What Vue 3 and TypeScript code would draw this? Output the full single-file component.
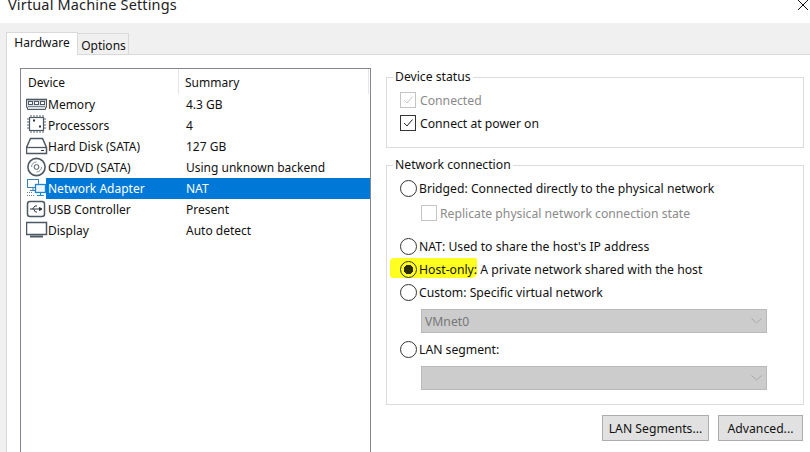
<script setup lang="ts">
const devices = [
  { id: 'mem', name: 'Memory', summary: '4.3 GB' },
  { id: 'cpu', name: 'Processors', summary: '4' },
  { id: 'hdd', name: 'Hard Disk (SATA)', summary: '127 GB' },
  { id: 'cd', name: 'CD/DVD (SATA)', summary: 'Using unknown backend' },
  { id: 'net', name: 'Network Adapter', summary: 'NAT' },
  { id: 'usb', name: 'USB Controller', summary: 'Present' },
  { id: 'disp', name: 'Display', summary: 'Auto detect' },
]
</script>

<template>
  <div class="win">
    <div class="title">
      <span class="title-text">Virtual Machine Settings</span>
      <svg class="close" width="12" height="11" viewBox="0 0 12 11"><path d="M1 0L11 10M11 0L1 10" stroke="#111" fill="none" /></svg>
    </div>
    <div class="body">
      <div class="tabs">
        <div class="tab active">Hardware</div>
        <div class="tab">Options</div>
      </div>
      <div class="panel">
        <div class="list">
          <div class="head">
            <div class="c1">Device</div>
            <div class="c2">Summary</div>
          </div>
          <div v-for="d in devices" :key="d.id" class="row" :class="{ sel: d.id === 'net' }">
            <svg class="ico" width="22" height="21" viewBox="0 0 22 21">
              <g v-if="d.id === 'mem'" fill="none" stroke="#4d5962">
                <path d="M0.5 5.5H20.5V13.5H19.5V15.5H1.5V13.5H0.5Z" fill="#dde1e4" />
                <path d="M0 5.5H21" stroke-width="1.6" />
                <rect x="2.5" y="7.5" width="4" height="3" fill="#fff" />
                <rect x="8.5" y="7.5" width="4" height="3" fill="#fff" />
                <rect x="14.5" y="7.5" width="4" height="3" fill="#fff" />
                <path d="M2 12.5H19" stroke="#7a858d" />
              </g>
              <g v-else-if="d.id === 'cpu'" fill="none" stroke="#4d5962">
                <rect x="3.5" y="2.5" width="14" height="13" fill="#fff" stroke-width="1.2" />
                <path d="M5 0V2M8 0V2M11 0V2M14 0V2M17 0V2M5 16V18M8 16V18M11 16V18M14 16V18M17 16V18M1 4H3M1 7H3M1 10H3M1 13H3M18 4H20M18 7H20M18 10H20M18 13H20" stroke="#5b6770" />
                <path d="M7 5.5h2M13 11.5h2" stroke="#2c353c" stroke-width="2" />
              </g>
              <g v-else-if="d.id === 'hdd'" fill="none" stroke="#4d5962">
                <path d="M4.5 2.5H16.5L20.5 11.5V17.5H0.5V11.5Z" fill="#fff" stroke-width="1.5" />
                <path d="M1 11.5H20" stroke-width="1.3" />
                <path d="M15 14.5H18" stroke="#2c353c" />
              </g>
              <g v-else-if="d.id === 'cd'" fill="none" stroke="#4d5962">
                <circle cx="10.5" cy="10" r="8.6" stroke-width="1.6" fill="#fff" />
                <circle cx="10.5" cy="10" r="2.4" />
                <path d="M5.5 10a5 5 0 0 1 5-5M15.5 10a5 5 0 0 1-5 5" stroke="#8b959c" />
              </g>
              <g v-else-if="d.id === 'net'" fill="none">
                <rect x="1.5" y="1.5" width="11" height="8" fill="#fff" stroke="#3d7fb8" />
                <path d="M7 10V12M4 12.5H9" stroke="#3d7fb8" />
                <rect x="9.5" y="6.5" width="10" height="8" fill="#eef6fd" stroke="#1c86d6" stroke-width="1.3" />
                <path d="M14.5 15V17.5M11 17.5H18" stroke="#1c86d6" />
                <path d="M1 14.5H7M1 17.5H9" stroke="#6c7780" stroke-dasharray="1 1" />
              </g>
              <g v-else-if="d.id === 'usb'" fill="none" stroke="#4d5962">
                <rect x="1.5" y="2.5" width="17" height="15" rx="2.5" fill="#fff" stroke-width="1.5" />
                <path d="M4 10H14" stroke="#2c353c" />
                <path d="M13.5 8.5L16 10L13.5 11.5Z" fill="#2c353c" stroke="#2c353c" />
                <path d="M6.5 10L9 7H11M7.5 10L9.5 13H11" stroke="#2c353c" />
              </g>
              <g v-else fill="none" stroke="#4d5962">
                <rect x="0.5" y="2.5" width="20" height="12" fill="#fff" stroke-width="1.5" />
                <path d="M4 16.5H17" stroke-width="2" />
              </g>
            </svg>
            <div class="name">{{ d.name }}</div>
            <div class="sum">{{ d.summary }}</div>
          </div>
        </div>
        <div class="right">
          <fieldset class="group status">
            <legend>Device status</legend>
            <div class="inner">
              <label class="opt dis">
                <span class="cb dim"><svg width="12" height="12" viewBox="0 0 12 12"><path d="M2 6L5 9L10.5 2.5" stroke="#c8c8c8" fill="none" /></svg></span>Connected
              </label>
              <label class="opt second">
                <span class="cb"><svg width="12" height="12" viewBox="0 0 12 12"><path d="M2 6L5 9L10.5 2.5" stroke="#222" fill="none" /></svg></span>Connect at power on
              </label>
            </div>
          </fieldset>
          <fieldset class="group net">
            <legend>Network connection</legend>
            <div class="inner">
              <label class="opt"><span class="rd"></span>Bridged: Connected directly to the physical network</label>
              <label class="opt dis r2"><span class="cb dim"></span>Replicate physical network connection state</label>
              <label class="opt r3"><span class="rd"></span>NAT: Used to share the host's IP address</label>
              <label class="opt r4">
                <span class="hl"></span>
                <span class="rd on"></span>Host-only: A private network shared with the host
              </label>
              <label class="opt r5"><span class="rd"></span>Custom: Specific virtual network</label>
              <div class="select"><span>VMnet0</span><svg width="11" height="6" viewBox="0 0 11 6"><path d="M0.5 0.5L5.5 5L10.5 0.5" stroke="#a8a8a8" fill="none" /></svg></div>
              <label class="opt r6"><span class="rd"></span>LAN segment:</label>
              <div class="select"><span></span><svg width="11" height="6" viewBox="0 0 11 6"><path d="M0.5 0.5L5.5 5L10.5 0.5" stroke="#a8a8a8" fill="none" /></svg></div>
            </div>
          </fieldset>
          <div class="btns">
            <button class="btn b1">LAN Segments...</button>
            <button class="btn b2">Advanced...</button>
          </div>
        </div>
      </div>
    </div>
  </div>
</template>

<style>
html, body { margin: 0; background: #fff; overflow: hidden; }
</style>

<style scoped>
.win { width: 810px; height: 452px; overflow: hidden; display: flex; flex-direction: column; font-family: "Noto Sans", "Open Sans", sans-serif; font-size: 12px; color: #111; }
.title { height: 23px; flex: none; background: #fff; display: flex; justify-content: space-between; padding: 0 0 0 8px; box-sizing: border-box; overflow: hidden; }
.title-text { font-size: 14.5px; line-height: 9px; color: #222; letter-spacing: 0.15px; }
.close { margin: 0 1px 0 0; }
.body { flex: 1; background: #f0f0f0; padding: 9px 0 0 6px; display: flex; flex-direction: column; }
.tabs { display: flex; align-items: flex-end; height: 23px; flex: none; position: relative; z-index: 1; }
.tab { width: 51px; height: 22px; padding-left: 1px; box-sizing: border-box; border: 1px solid #d9d9d9; border-left: 0; text-align: center; line-height: 23px; background: #f0f0f0; }
.tab.active { width: 72px; height: 23px; padding-left: 0; background: #fff; border-left: 1px solid #d9d9d9; border-bottom: 0; line-height: 20px; }
.panel { flex: 1; background: #fff; border: 1px solid #d9d9d9; border-right: 0; border-bottom: 0; margin-top: -1px; padding: 13px 0 0 13px; display: flex; gap: 15px; }
.list { width: 351px; height: 400px; box-sizing: border-box; border: 1px solid #828790; flex: none; }
.head { display: flex; height: 25px; line-height: 28px; }
.c1 { width: 158px; padding-left: 7px; box-sizing: border-box; border-right: 1px solid #e5e5e5; }
.c2 { flex: 1; padding-left: 6px; border-right: 1px solid #e5e5e5; margin-right: 1px; }
.row { display: flex; height: 21px; line-height: 22px; padding-left: 5px; }
.ico { flex: none; }
.name { width: 138px; flex: none; }
.row.sel { background: linear-gradient(90deg, #fff 25px, #0078d7 25px); color: #fff; }
.right { width: 418px; flex: none; font-size: 12.2px; }
.group { margin: 0; padding: 0; border: 1px solid #dcdcdc; min-width: 0; box-sizing: border-box; }
.group legend { margin-left: 6px; padding: 0 2px; font-size: 12.2px; line-height: 14px; }
.inner { padding-left: 13px; }
.status { height: 78px; margin-top: 2px; }
.status .inner { padding-top: 6px; }
.net { height: 247px; margin-top: 10px; }
.net .inner { padding-top: 6px; }
.opt { display: flex; align-items: center; height: 20px; position: relative; }
.opt.dis { color: #8a8a8a; }
.opt.second { margin-top: 3px; }
.cb { width: 16px; height: 16px; box-sizing: border-box; border: 1px solid #333; margin-right: 4px; display: flex; align-items: center; justify-content: center; background: #fff; flex: none; }
.cb.dim { border-color: #c4c4c4; }
.rd { width: 17px; height: 17px; box-sizing: border-box; border: 1px solid #333; border-radius: 50%; margin-right: 2px; background: #fff; flex: none; }
.rd.on { background: radial-gradient(circle, #2b2b00 0 4.6px, #ffff20 5px); }
.hl { position: absolute; left: -10px; top: -1px; width: 87px; height: 20px; background: #ffff20; border-radius: 4px 2px 5px 3px; z-index: -1; }
.r2 { padding-left: 21px; margin-top: 5px; }
.r2 .cb { margin-right: 3px; }
.r3 { margin-top: 13px; }
.r4 { margin-top: 3px; isolation: isolate; }
.r5 { margin-top: 3px; }
.r6 { margin-top: 6px; }
.select { width: 346px; height: 24px; margin: 7px 0 0 21px; background: #cccccc; border: 1px solid #b9b9b9; box-sizing: border-box; display: flex; justify-content: space-between; align-items: center; padding: 0 4px 0 3px; color: #777; }
.btns { display: flex; justify-content: flex-end; gap: 9px; margin-top: 10px; padding-right: 1px; }
.btn { height: 26px; box-sizing: border-box; border: 1px solid #adadad; background: #e1e1e1; font: inherit; color: #111; padding: 0; }
.b1 { width: 107px; }
.b2 { width: 85px; }
</style>
